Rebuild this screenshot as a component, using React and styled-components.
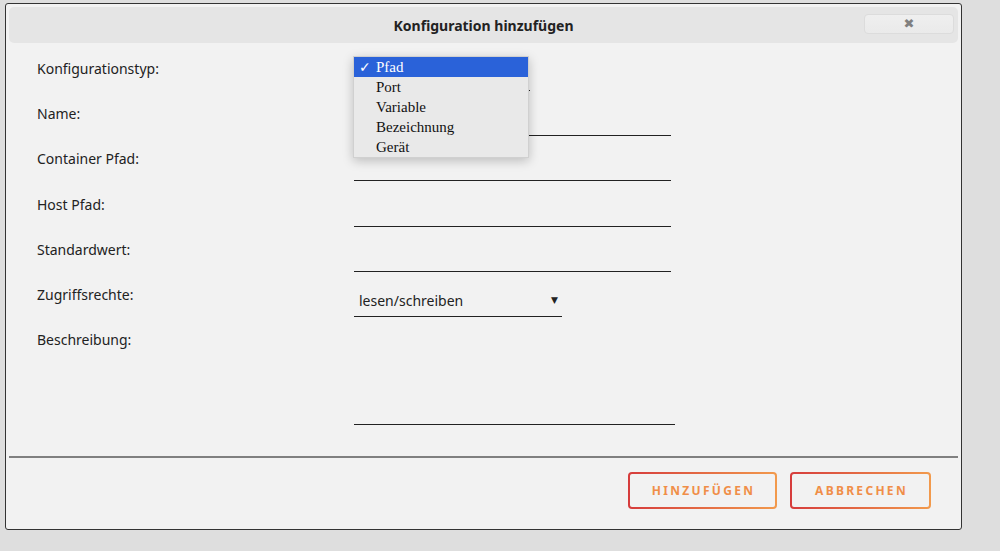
import React, { useState } from "react";
import styled, { createGlobalStyle } from "styled-components";

const GlobalStyle = createGlobalStyle`
  html, body {
    margin: 0;
    padding: 0;
    background: #dedede;
    font-family: "Noto Sans", "Liberation Sans", sans-serif;
  }
`;

const Page = styled.div`
  width: 1000px;
  height: 551px;
  padding: 3px 0 0 5px;
  box-sizing: border-box;
  overflow: hidden;
`;

const Dialog = styled.div`
  width: 957px;
  height: 527px;
  box-sizing: border-box;
  border: 1px solid #333;
  border-radius: 3px;
  background: #f2f2f2;
  padding: 3px;
  display: flex;
  flex-direction: column;
`;

const Header = styled.div`
  height: 36px;
  background: #e5e5e5;
  border-radius: 5px;
  display: flex;
  align-items: center;
  justify-content: center;
  position: relative;
`;

const Title = styled.div`
  font-size: 14px;
  font-weight: 700;
  color: #222;
`;

const CloseButton = styled.button`
  position: absolute;
  right: 4px;
  top: 7px;
  width: 90px;
  height: 20px;
  border: 1px solid #dcdcdc;
  border-radius: 4px;
  background: linear-gradient(#efefef, #eaeaea);
  color: #808080;
  font-size: 13px;
  line-height: 18px;
  padding: 0;
  cursor: pointer;
  font-family: "DejaVu Sans", sans-serif;
`;

const Form = styled.div`
  padding: 16px 0 0 28px;
  flex: 1;
`;

const Row = styled.div`
  display: flex;
  height: ${(p) => p.$h || 45.2}px;
  position: relative;
`;

const Label = styled.div`
  width: 317px;
  font-size: 14px;
  line-height: 20px;
  color: #222;
`;

const TextInput = styled.input`
  width: ${(p) => p.$w || 317}px;
  height: 32px;
  box-sizing: border-box;
  border: none;
  border-bottom: 1px solid #222;
  background: transparent;
  font-family: inherit;
  font-size: 14px;
  padding: 0 5px;
  outline: none;
`;

const SelectBox = styled.div`
  width: ${(p) => p.$w}px;
  height: 32px;
  box-sizing: border-box;
  border-bottom: 1px solid #222;
  display: flex;
  align-items: center;
  justify-content: space-between;
  padding: 0 4px 0 5px;
  font-size: 14px;
  color: #222;
  visibility: visible;

  & > span {
    visibility: ${(p) => (p.$open ? "hidden" : "visible")};
  }
`;

const Arrow = styled.span`
  font-size: 9px;
  font-family: "DejaVu Sans", sans-serif;
`;

const TextArea = styled.textarea`
  width: 321px;
  height: 95px;
  box-sizing: border-box;
  border: none;
  border-bottom: 1px solid #222;
  background: transparent;
  resize: none;
  outline: none;
  font-family: inherit;
`;

const Menu = styled.ul`
  position: absolute;
  left: 316px;
  top: -3px;
  width: 176px;
  margin: 0;
  padding: 0;
  list-style: none;
  background: #e9e9e9;
  border: 1px solid #d0d0d0;
  box-shadow: 0 3px 10px rgba(0, 0, 0, 0.22);
  box-sizing: border-box;
  z-index: 2;
`;

const MenuItem = styled.li`
  height: 20px;
  line-height: 20px;
  padding-left: 22px;
  position: relative;
  font-family: "Liberation Serif", serif;
  font-size: 15px;
  color: ${(p) => (p.$active ? "#fff" : "#111")};
  background: ${(p) => (p.$active ? "#2a62d9" : "transparent")};
`;

const Check = styled.span`
  position: absolute;
  left: 5px;
  font-family: "DejaVu Sans", sans-serif;
  font-size: 14px;
  font-weight: 700;
`;

const Divider = styled.div`
  height: 2px;
  background: #808080;
  margin-top: 4px;
`;

const Footer = styled.div`
  display: flex;
  justify-content: flex-end;
  gap: 13px;
  padding: 14px 27px 0 0;
  height: 54px;
`;

const ActionButton = styled.button`
  width: ${(p) => p.$w}px;
  height: 37px;
  border: 2px solid transparent;
  border-radius: 4px;
  background: linear-gradient(#f2f2f2, #f2f2f2) padding-box,
    linear-gradient(90deg, #d63c3c, #f29a4c) border-box;
  color: #f08e48;
  font-family: "Noto Sans", sans-serif;
  font-size: 12px;
  font-weight: 700;
  letter-spacing: 2.3px;
  padding: 0 0 0 2px;
  cursor: pointer;
`;

const options = ["Pfad", "Port", "Variable", "Bezeichnung", "Gerät"];

export default function App() {
  const [type, setType] = useState("Pfad");
  const [open, setOpen] = useState(true);

  return (
    <Page>
      <GlobalStyle />
      <Dialog>
        <Header>
          <Title>Konfiguration hinzufügen</Title>
          <CloseButton>✖</CloseButton>
        </Header>
        <Form>
          <Row>
            <Label>Konfigurationstyp:</Label>
            <SelectBox $w={176} $open={open} onClick={() => setOpen(!open)}>
              <span>{type}</span>
              <span>
                <Arrow>▼</Arrow>
              </span>
            </SelectBox>
            {open && (
              <Menu>
                {options.map((o) => (
                  <MenuItem
                    key={o}
                    $active={o === type}
                    onClick={() => {
                      setType(o);
                      setOpen(false);
                    }}
                  >
                    {o === type && <Check>✓</Check>}
                    {o}
                  </MenuItem>
                ))}
              </Menu>
            )}
          </Row>
          <Row>
            <Label>Name:</Label>
            <TextInput />
          </Row>
          <Row>
            <Label>Container Pfad:</Label>
            <TextInput />
          </Row>
          <Row>
            <Label>Host Pfad:</Label>
            <TextInput />
          </Row>
          <Row>
            <Label>Standardwert:</Label>
            <TextInput />
          </Row>
          <Row>
            <Label>Zugriffsrechte:</Label>
            <SelectBox $w={208}>
              <span>lesen/schreiben</span>
              <Arrow>▼</Arrow>
            </SelectBox>
          </Row>
          <Row $h={114}>
            <Label>Beschreibung:</Label>
            <TextArea />
          </Row>
        </Form>
        <Divider />
        <Footer>
          <ActionButton $w={149}>HINZUFÜGEN</ActionButton>
          <ActionButton $w={141}>ABBRECHEN</ActionButton>
        </Footer>
      </Dialog>
    </Page>
  );
}
